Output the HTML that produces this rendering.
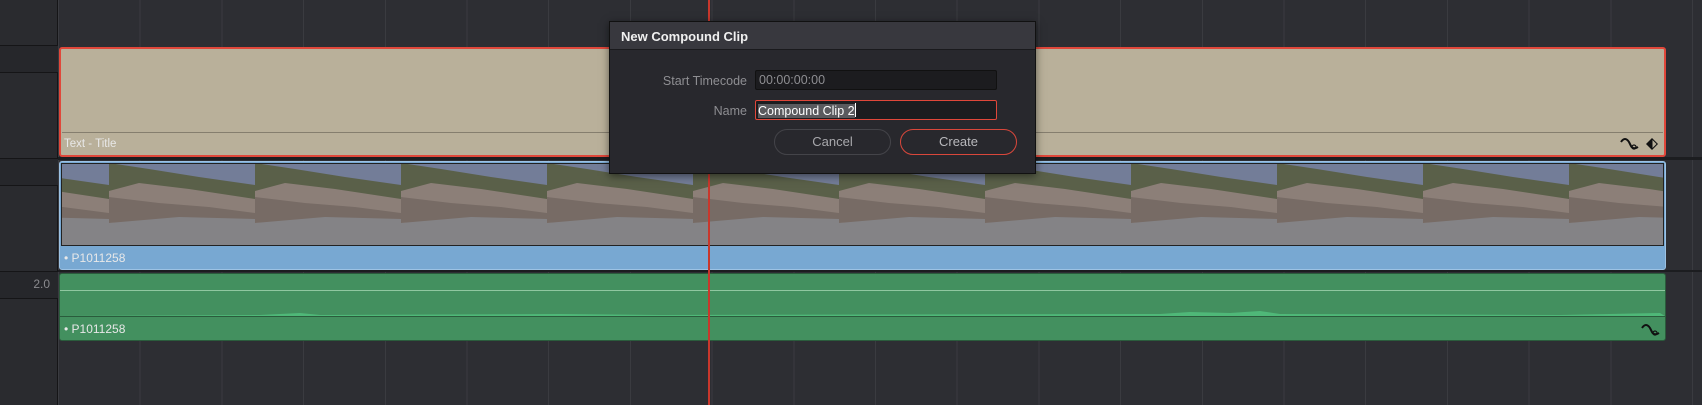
<!DOCTYPE html>
<html><head><style>
*{margin:0;padding:0;box-sizing:border-box}
body{width:1702px;height:405px;background:#2d2e33;position:relative;overflow:hidden;font-family:"Liberation Sans",sans-serif}
.abs{position:absolute}
.grid{position:absolute;top:0;left:58px;right:0;height:405px;background:repeating-linear-gradient(90deg,#3a3b40 0 1px,transparent 1px 81.7px)}
.lbl{color:#e8e8e8;font-size:12px;position:absolute}
</style></head><body>
<div class="grid"></div>
<div class="abs" style="left:0;top:0;width:58px;height:405px;background:#2a2b2f;border-right:1px solid #151517"></div>
<div class="abs" style="left:0;top:45px;width:58px;height:28px;background:#26272b;border-top:1px solid #151517;border-bottom:1px solid #151517"></div>
<div class="abs" style="left:0;top:158px;width:58px;height:28px;background:#26272b;border-top:1px solid #151517;border-bottom:1px solid #151517"></div>
<div class="abs" style="left:0;top:271px;width:58px;height:28px;background:#26272b;border-top:1px solid #151517;border-bottom:1px solid #151517;color:#8a8a8e;font-size:12px;text-align:right;padding:5px 8px 0 0">2.0</div>
<div class="abs" style="left:58px;top:157px;right:0;height:3px;background:#1c1d20"></div>
<div class="abs" style="left:58px;top:270px;right:0;height:2px;background:#1c1d20"></div>

<div class="abs" style="left:59px;top:47px;width:1607px;height:110px;background:#b9b09a;border:2px solid #e0473a;border-radius:3px"></div>
<div class="abs" style="left:62px;top:132px;width:1601px;height:1px;background:#857e6e"></div>
<div class="lbl" style="left:64px;top:138px;font-size:11.5px">Text - Title</div>
<svg class="abs" style="left:1619px;top:135px" width="44" height="18" viewBox="0 0 44 18"><path d="M2 7 Q6 1 10 7 L12 11 Q14 15 19 12" fill="none" stroke="#111" stroke-width="2"/><circle cx="15" cy="12" r="2" fill="none" stroke="#111" stroke-width="1.2"/><path d="M33 3 L39 9 L33 15 L27 9Z" fill="#111"/><path d="M33.5 5 L33.5 13 L37.5 9Z" fill="#b9b09a"/></svg>

<div class="abs" style="left:59px;top:161px;width:1607px;height:109px;background:#78a8d2;border:1px solid #9cc2e4;border-radius:3px"></div>
<svg class="abs" style="left:61px;top:163px" width="1603" height="83">
<defs><pattern id="p" x="48" y="0" width="146" height="83" patternUnits="userSpaceOnUse">
<rect width="146" height="83" fill="#737d98"/>
<polygon points="0,0 40,6 90,14 146,22 146,48 0,40" fill="#5a6049"/>
<polygon points="0,28 30,20 80,26 146,36 146,58 0,62" fill="#8c7f78"/>
<polygon points="0,34 50,40 100,44 146,50 146,56 0,60" fill="#6e625d" opacity=".7"/>
<polygon points="0,60 70,54 146,56 146,83 0,83" fill="#848386"/>
</pattern></defs>
<rect width="1603" height="83" fill="#80838f"/>
<rect x="48" width="1555" height="83" fill="url(#p)"/>
<rect x="0" y="0" width="48" height="83" fill="url(#p)"/>
<rect x=".5" y=".5" width="1602" height="82" fill="none" stroke="#222"/>
</svg>
<div class="lbl" style="left:64px;top:251px">• P1011258</div>

<div class="abs" style="left:59px;top:273px;width:1607px;height:68px;background:#43905f;border:1px solid #2a5c3c;border-radius:3px"></div>
<div class="abs" style="left:60px;top:290px;width:1605px;height:1px;background:#8fc7a0"></div>
<svg class="abs" style="left:60px;top:305px" width="1605" height="12"><path d="M0 11 L200 10 L240 8 L260 10 L500 9 L600 10 L1100 9 L1130 7 L1170 8 L1200 6 L1220 9 L1500 10 L1600 8 L1605 11Z" fill="#4fb878"/></svg>
<div class="abs" style="left:60px;top:316px;width:1605px;height:1px;background:#2a5c3c"></div>
<div class="lbl" style="left:64px;top:322px">• P1011258</div>
<svg class="abs" style="left:1640px;top:321px" width="24" height="18"><path d="M2 7 Q6 1 10 7 L12 11 Q14 15 19 12" fill="none" stroke="#111" stroke-width="2"/><circle cx="15" cy="12" r="2" fill="none" stroke="#111" stroke-width="1.2"/></svg>

<div class="abs" style="left:708px;top:0;width:2px;height:405px;background:#c9372c"></div>

<div class="abs" style="left:609px;top:21px;width:427px;height:153px;background:#28282d;border:1px solid #111;box-shadow:0 2px 8px rgba(0,0,0,.5)">
 <div style="height:28px;background:#38383e;border-bottom:1px solid #1a1a1d;color:#f0f0f0;font-weight:bold;font-size:13px;padding:7px 0 0 11px">New Compound Clip</div>
 <div class="abs" style="right:288px;top:52px;color:#8e8e92;font-size:12.5px">Start Timecode</div>
 <div class="abs" style="left:145px;top:48px;width:242px;height:20px;background:#1c1c1f;border:1px solid #111;border-radius:2px;color:#8e8e92;font-size:12.5px;padding:2px 3px">00:00:00:00</div>
 <div class="abs" style="right:288px;top:82px;color:#8e8e92;font-size:12.5px">Name</div>
 <div class="abs" style="left:145px;top:78px;width:242px;height:20px;background:#1c1c1f;border:1px solid #e0473a;border-radius:2px;font-size:12.5px;padding:2px 2px"><span style="background:#5a5a5e;color:#fff">Compound Clip 2</span><span style="display:inline-block;width:1px;height:14px;background:#fff;vertical-align:-2px"></span></div>
 <div class="abs" style="left:164px;top:107px;width:117px;height:26px;border:1px solid #444449;border-radius:13px;color:#a8a8ac;font-size:13px;text-align:center;line-height:24px">Cancel</div>
 <div class="abs" style="left:290px;top:107px;width:117px;height:26px;border:1px solid #d9473b;border-radius:13px;color:#b8b8bc;font-size:13px;text-align:center;line-height:24px">Create</div>
</div>
</body></html>
